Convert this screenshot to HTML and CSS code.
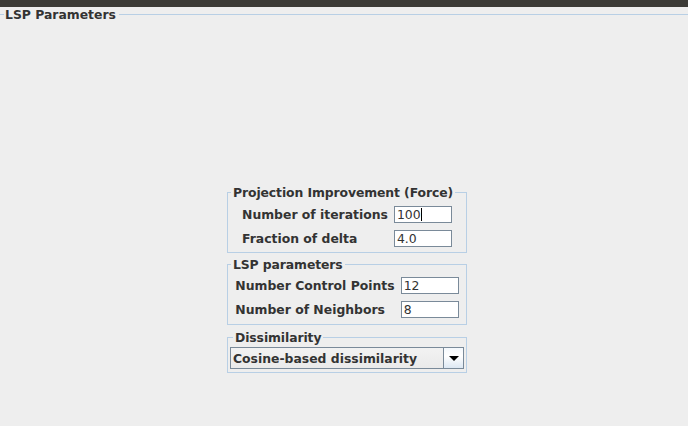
FILE: index.html
```html
<!DOCTYPE html>
<html>
<head>
<meta charset="utf-8">
<link rel="stylesheet" href="styles.css">
</head>
<body>
<div class="titlebar"></div>
<fieldset class="outer">
  <legend class="outer-title">LSP Parameters</legend>
  <div class="stack">
    <fieldset class="group g1">
      <legend class="group-title">Projection Improvement (Force)</legend>
      <div class="form">
        <label class="lbl">Number of iterations</label>
        <div class="field">100<span class="caret"></span></div>
        <label class="lbl">Fraction of delta</label>
        <div class="field">4.0</div>
      </div>
    </fieldset>
    <fieldset class="group g2">
      <legend class="group-title">LSP parameters</legend>
      <div class="form">
        <label class="lbl">Number Control Points</label>
        <div class="field">12</div>
        <label class="lbl">Number of Neighbors</label>
        <div class="field">8</div>
      </div>
    </fieldset>
    <fieldset class="group g3">
      <legend class="group-title">Dissimilarity</legend>
      <div class="combo">
        <div class="combo-text">Cosine-based dissimilarity</div>
        <div class="combo-btn"><span class="arrow"></span></div>
      </div>
    </fieldset>
  </div>
</fieldset>
</body>
</html>
```

FILE: styles.css
```css
html, body {
  margin: 0;
  padding: 0;
  width: 688px;
  height: 426px;
  overflow: hidden;
  background: #eeeeee;
  font-family: "DejaVu Sans", sans-serif;
  font-size: 12.4px;
  color: #333333;
}

.titlebar {
  height: 7px;
  background: #3c3b37;
}

.outer {
  margin: 0 -3px 0 -1px;
  padding: 0;
  border: 1px solid #b8cfe5;
  height: 600px;
  box-sizing: border-box;
}

.outer-title {
  margin-left: 4px;
  padding: 0 3px 0 1px;
  font-weight: bold;
  line-height: 15px;
}

.stack {
  display: flex;
  flex-direction: column;
  align-items: center;
  padding-top: 163px;
  padding-left: 4px;
}

.group {
  width: 240px;
  box-sizing: border-box;
  margin: 0;
  padding: 0;
  border: 1px solid #b8cfe5;
}

.group-title {
  margin-left: 3px;
  padding: 0 2px;
  font-weight: bold;
  line-height: 15px;
  letter-spacing: -0.1px;
}

.g1 { padding: 6px 0 5px; }
.g2 { margin-top: 4px; padding: 5px 0 6px; }
.g3 { margin-top: 5px; padding: 2px 2px 3px 2px; }

.form {
  display: grid;
  grid-template-columns: auto 58px;
  column-gap: 6px;
  row-gap: 7px;
  justify-content: center;
  align-items: center;
}

.lbl {
  font-weight: bold;
  white-space: nowrap;
}

.field {
  height: 17px;
  box-sizing: border-box;
  border: 1px solid #7a8a99;
  background: #ffffff;
  padding: 0 2px;
  line-height: 15px;
  display: flex;
  align-items: center;
}

.caret {
  display: inline-block;
  width: 1px;
  height: 13px;
  background: #000000;
}

.combo {
  display: flex;
  height: 22px;
  box-sizing: border-box;
  border: 1px solid #7a8a99;
  background: #eeeeee;
}

.combo-text {
  flex: 1;
  font-weight: bold;
  padding-left: 2px;
  display: flex;
  align-items: center;
  background: linear-gradient(#f2f2f2, #eaeaea);
}

.combo-btn {
  width: 19px;
  border-left: 1px solid #7a8a99;
  background: linear-gradient(#f4f8fc, #ffffff 40%, #dde8f3);
  display: flex;
  align-items: center;
  justify-content: center;
}

.arrow {
  width: 0;
  height: 0;
  border-left: 5px solid transparent;
  border-right: 5px solid transparent;
  border-top: 5px solid #000000;
}
```
